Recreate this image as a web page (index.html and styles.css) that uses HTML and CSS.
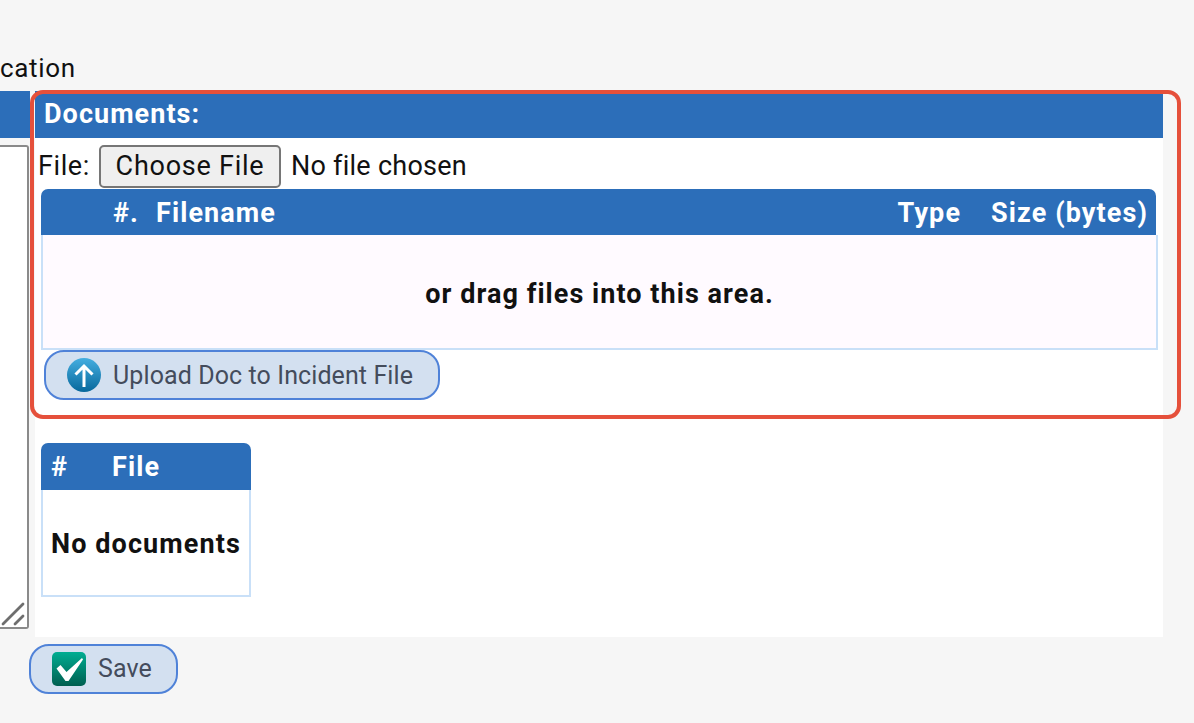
FILE: index.html
```html
<!DOCTYPE html>
<html lang="en">
<head>
<meta charset="utf-8">
<title>Documents</title>
<link rel="stylesheet" href="styles.css">
</head>
<body>
<div class="page">
  <div class="crumb">cation</div>
  <div class="columns">
    <div class="left-col">
      <div class="left-head"></div>
      <div class="left-box">
        <svg class="grip" width="26" height="26" viewBox="0 0 26 26"><path d="M2 23 L22 3 M14 23 L22 15" stroke="#6e6e6e" stroke-width="2.800" stroke-linecap="round" fill="none"/></svg>
      </div>
    </div>
    <section class="panel">
      <h2 class="panel-head">Documents:</h2>
      <div class="file-row">
        <label class="file-label">File:</label>
        <button class="choose" type="button">Choose File</button>
        <span class="file-state">No file chosen</span>
      </div>
      <div class="drop">
        <div class="drop-head">
          <span class="col-num">#.</span>
          <span class="col-name">Filename</span>
          <span class="col-type">Type</span>
          <span class="col-size">Size (bytes)</span>
        </div>
        <div class="drop-body">or drag files into this area.</div>
      </div>
      <button class="action upload" type="button">
        <svg class="icon" width="36" height="36" viewBox="0 0 36 36">
          <defs><linearGradient id="ug" x1="0" y1="0" x2="0" y2="1"><stop offset="0" stop-color="#45aee0"/><stop offset="1" stop-color="#07689c"/></linearGradient></defs>
          <circle cx="18" cy="18" r="17" fill="url(#ug)"/>
          <path d="M18 30 V9 M9.500 17.500 L18 9 L26.500 17.500" stroke="#fff" stroke-width="3" fill="none"/>
        </svg>
        <span>Upload Doc to Incident File</span>
      </button>
      <div class="docs">
        <div class="docs-head"><span class="docs-num">#</span><span>File</span></div>
        <div class="docs-body">No documents</div>
      </div>
    </section>
  </div>
  <button class="action save" type="button">
    <svg class="icon" width="34" height="34" viewBox="0 0 34 34">
      <defs><linearGradient id="sg" x1="0" y1="0" x2="0" y2="1"><stop offset="0" stop-color="#00ad92"/><stop offset="1" stop-color="#005f50"/></linearGradient></defs>
      <rect width="34" height="34" rx="5" fill="url(#sg)"/>
      <path d="M4.500 16.500 L8.500 13 L14.500 20 L30 6 L31 7.500 L16.500 29 L13.500 29 Z" fill="#fff"/>
    </svg>
    <span>Save</span>
  </button>
  <div class="highlight"></div>
</div>
</body>
</html>
```
FILE: styles.css
```css
* { box-sizing: border-box; }
html, body { margin: 0; height: 100%; overflow: hidden; }
body { background: #f6f6f6; font-family: Roboto, "Liberation Sans", sans-serif; color: #111; }
.page { position: relative; height: 723px; padding-top: 53px; }
.crumb { font-size: 26px; line-height: 30px; height: 38px; letter-spacing: .65px; }
.columns { display: flex; gap: 5px; height: 546px; }
.left-col { width: 30px; flex: none; display: flex; flex-direction: column; }
.left-head { height: 47px; background: #2c6eb9; flex: none; }
.left-box { height: 484px; margin-top: 7px; width: 29px; background: #fff; border: 2px solid #8a8a8a; border-left: 0; border-radius: 0 3px 3px 0; display: flex; align-items: flex-end; justify-content: flex-end; }
.grip { display: block; }
.panel { width: 1128px; flex: none; background: #fff; }
.panel-head { margin: 0; height: 47px; background: #2c6eb9; color: #fff; font-size: 27px; font-weight: 700; line-height: 47px; padding-left: 9px; letter-spacing: 1.05px; }
.file-row { display: flex; align-items: flex-end; height: 51px; padding: 0 0 1px 3px; font-size: 27px; letter-spacing: .25px; line-height: 43px; }
.file-label { width: 61px; letter-spacing: .6px; }
.choose { width: 182px; height: 43px; padding: 0; font: inherit; letter-spacing: .75px; line-height: 1; color: #111; background: #efefef; border: 2px solid #767676; border-radius: 5px; margin-right: 10px; }
.drop { margin: 0 5px 0 6px; }
.drop-head { display: flex; height: 46px; margin-right: 2px; align-items: center; background: #2c6eb9; color: #fff; font-size: 27px; font-weight: 700; border-radius: 7px 7px 0 0; padding: 2px 8px 0 72px; letter-spacing: 1.1px; }
.col-num { width: 43px; }
.col-name { flex: 1; }
.col-size { margin-left: 30px; }
.drop-body { height: 115px; padding-top: 5px; background: #fffaff; border: 2px solid #c9e0f8; border-top: 0; display: flex; align-items: center; justify-content: center; font-size: 27px; font-weight: 700; letter-spacing: 1.05px; }
.action { display: flex; align-items: center; height: 50px; background: #d3e0f0; border: 2px solid #4f82d8; border-radius: 20px; font: inherit; font-size: 25px; letter-spacing: .1px; color: #444c5c; padding: 0; }
.upload { width: 396px; margin-left: 9px; padding-left: 20px; gap: 11px; }
.save { position: relative; width: 149px; margin: 7px 0 0 29px; padding-left: 21px; gap: 12px; line-height: 28px; }
.icon { flex: none; display: block; }
.docs { width: 210px; margin: 43px 0 0 6px; }
.docs-head { display: flex; height: 47px; align-items: center; background: #2c6eb9; color: #fff; font-size: 27px; font-weight: 700; letter-spacing: 1.1px; border-radius: 7px 7px 0 0; padding-left: 10px; }
.docs-num { width: 61px; }
.docs-body { height: 107px; padding-top: 3px; border: 2px solid #c9e0f8; border-top: 0; display: flex; align-items: center; justify-content: center; font-size: 27px; font-weight: 700; letter-spacing: 1.1px; white-space: nowrap; }
.highlight { position: absolute; left: 30px; top: 90px; width: 1151px; height: 329px; border: 4px solid #e5503b; border-radius: 13px; pointer-events: none; }
```
